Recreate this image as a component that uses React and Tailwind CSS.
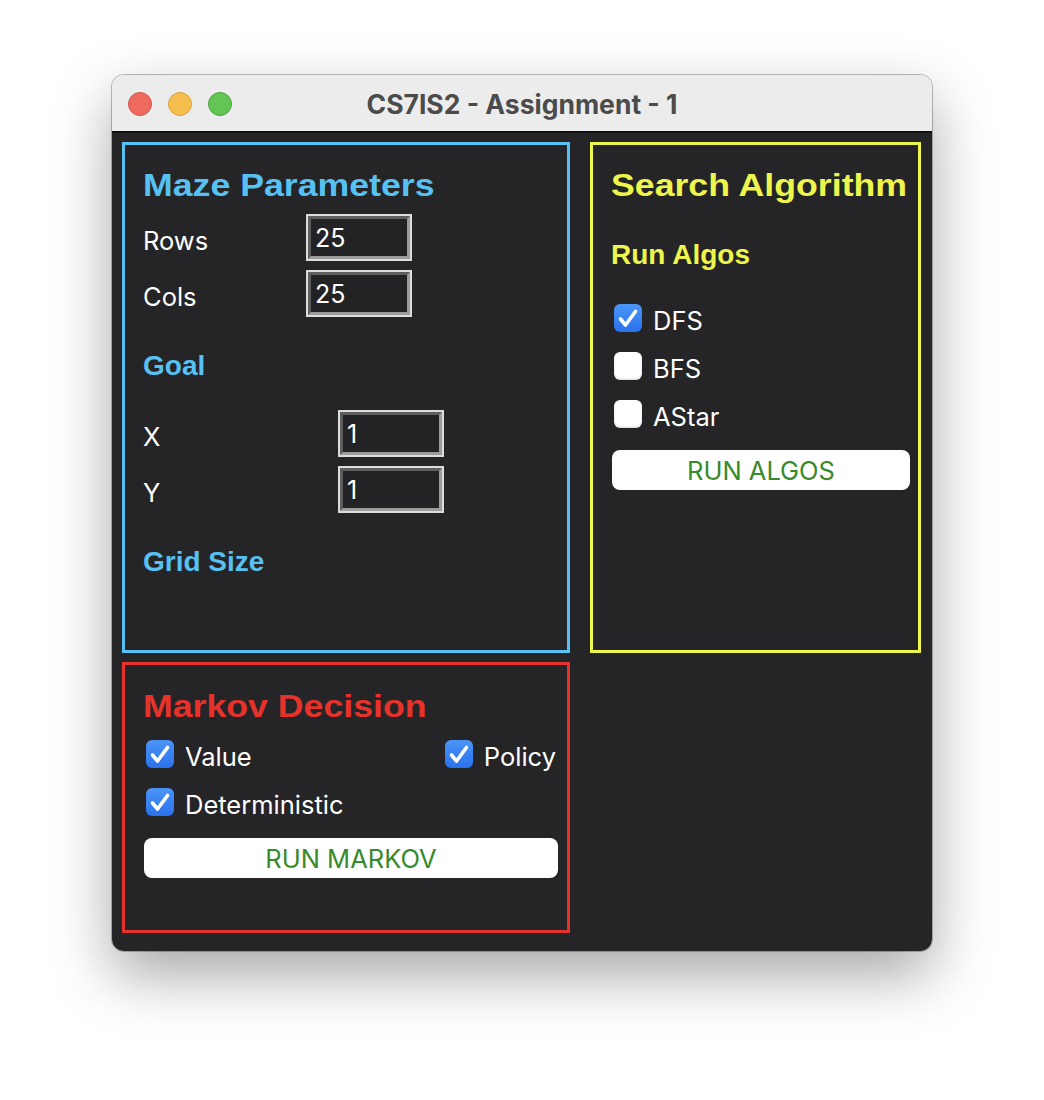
const sans = { fontFamily: "Inter, 'Liberation Sans', sans-serif" };

function Check({ checked }) {
  if (!checked) {
    return (
      <span className="block h-[28px] w-[28px] shrink-0 rounded-[6px] bg-white shadow-[inset_0_-1px_2px_rgba(0,0,0,0.18)]" />
    );
  }
  return (
    <span className="flex h-[28px] w-[28px] shrink-0 items-center justify-center rounded-[6px] bg-linear-to-b from-[#4b95f9] to-[#2a71ec]">
      <svg width="28" height="28" viewBox="0 0 28 28">
        <path
          d="M6.5 15 L11.5 21 L21.5 7.5"
          fill="none"
          stroke="white"
          strokeWidth="3.6"
          strokeLinecap="round"
          strokeLinejoin="round"
        />
      </svg>
    </span>
  );
}

function CheckRow({ label, checked }) {
  return (
    <label className="flex h-[28px] items-center gap-[11px] text-[25.5px] text-white" style={sans}>
      <Check checked={checked} />
      <span className="pt-[6px]">{label}</span>
    </label>
  );
}

function Field({ value }) {
  return (
    <div className="h-[47px] w-[106px] border-2 border-[#dcdcdc]">
      <div className="flex h-full w-full items-center border-[3px] border-t-[#5e5e5e] border-l-[#5e5e5e] border-r-[#9c9c9c] border-b-[#9c9c9c] bg-[#232325] pl-[4px] pt-[3px] text-[25px] text-white">
        {value}
      </div>
    </div>
  );
}

function FieldRow({ label, value, labelWidth }) {
  return (
    <div className="flex items-center text-[25.5px] text-white" style={sans}>
      <span className={`${labelWidth} pt-[7px]`}>{label}</span>
      <Field value={value} />
    </div>
  );
}

function Heading({ color, children }) {
  return (
    <h2
      className={`inline-block origin-left scale-x-[1.115] text-[32px] font-bold leading-[36px] ${color}`}
      style={{ fontFamily: "'Liberation Sans', Arial, sans-serif" }}
    >
      {children}
    </h2>
  );
}

function SubHeading({ color, children }) {
  return (
    <h3
      className={`text-[28px] font-bold leading-[34px] ${color}`}
      style={{ fontFamily: "'Liberation Sans', Arial, sans-serif" }}
    >
      {children}
    </h3>
  );
}

function RunButton({ children, width }) {
  return (
    <button
      className={`h-[40px] ${width} rounded-[8px] bg-white pt-[2px] text-[25.5px] text-[#378a2a]`}
      style={sans}
    >
      {children}
    </button>
  );
}

export default function App() {
  return (
    <div className="min-h-[1100px] bg-white pl-[112px] pt-[75px]">
      <div className="flex h-[876px] w-[820px] flex-col overflow-hidden rounded-[12px] shadow-[0_24px_60px_rgba(0,0,0,0.35),0_0_0_1px_rgba(0,0,0,0.25)]">

        {/* TITLE BAR */}
        <div className="relative flex h-[58px] shrink-0 items-center border-b-2 border-[#111] bg-[#ececec]">
          <div className="flex gap-[16px] pl-[16px] pt-[2px]">
            <span className="h-[24px] w-[24px] rounded-full border border-[#d5544b] bg-[#ee6a5f]" />
            <span className="h-[24px] w-[24px] rounded-full border border-[#d9a03c] bg-[#f5be4f]" />
            <span className="h-[24px] w-[24px] rounded-full border border-[#4ea43f] bg-[#62c554]" />
          </div>
          <div
            className="absolute inset-x-0 pt-[4px] text-center text-[26.5px] font-bold text-[#4b4b4b]"
            style={sans}
          >
            CS7IS2 - Assignment - 1
          </div>
        </div>

        {/* CONTENT */}
        <div className="grid flex-1 grid-cols-[448px_331px] grid-rows-[511px_271px] gap-x-[20px] gap-y-[9px] bg-[#252527] pl-[10px] pt-[9px]">

          {/* MAZE PARAMETERS */}
          <section className="flex flex-col border-[3px] border-[#56c1f2] pl-[18px]">
            <div className="mt-[22px]">
              <Heading color="text-[#56c1f2]">Maze Parameters</Heading>
            </div>
            <div className="mt-[11px] flex flex-col gap-[9px]">
              <FieldRow label="Rows" value="25" labelWidth="w-[163px]" />
              <FieldRow label="Cols" value="25" labelWidth="w-[163px]" />
            </div>
            <div className="mt-[32px]">
              <SubHeading color="text-[#56c1f2]">Goal</SubHeading>
            </div>
            <div className="mt-[27px] flex flex-col gap-[9px]">
              <FieldRow label="X" value="1" labelWidth="w-[195px]" />
              <FieldRow label="Y" value="1" labelWidth="w-[195px]" />
            </div>
            <div className="mt-[32px]">
              <SubHeading color="text-[#56c1f2]">Grid Size</SubHeading>
            </div>
          </section>

          {/* SEARCH ALGORITHM */}
          <section className="flex flex-col border-[3px] border-[#eef54b] pl-[18px]">
            <div className="mt-[22px]">
              <Heading color="text-[#eef54b]">Search Algorithm</Heading>
            </div>
            <div className="mt-[35px]">
              <SubHeading color="text-[#eef54b]">Run Algos</SubHeading>
            </div>
            <div className="ml-[3px] mt-[32px] flex flex-col gap-[20px]">
              <CheckRow label="DFS" checked />
              <CheckRow label="BFS" />
              <CheckRow label="AStar" />
            </div>
            <div className="ml-px mt-[22px]">
              <RunButton width="w-[298px]">RUN ALGOS</RunButton>
            </div>
          </section>

          {/* MARKOV DECISION */}
          <section className="flex flex-col border-[3px] border-[#e6322a] pl-[18px] pr-[11px]">
            <div className="mt-[23px]">
              <Heading color="text-[#e6322a]">Markov Decision</Heading>
            </div>
            <div className="ml-[3px] mt-[16px] flex flex-col gap-[20px]">
              <div className="flex justify-between">
                <CheckRow label="Value" checked />
                <CheckRow label="Policy" checked />
              </div>
              <CheckRow label="Deterministic" checked />
            </div>
            <div className="ml-px mt-[22px]">
              <RunButton width="w-[414px]">RUN MARKOV</RunButton>
            </div>
          </section>

        </div>
      </div>
    </div>
  );
}
